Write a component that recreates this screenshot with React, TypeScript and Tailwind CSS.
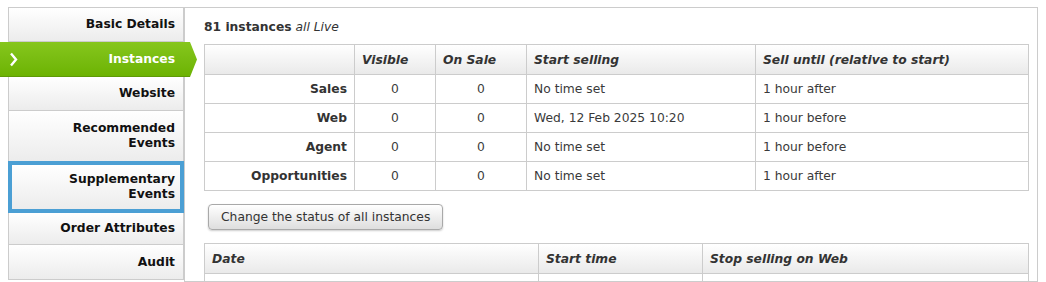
import React from "react";

const rows = [
  { label: "Sales", visible: 0, onSale: 0, start: "No time set", until: "1 hour after" },
  { label: "Web", visible: 0, onSale: 0, start: "Wed, 12 Feb 2025 10:20", until: "1 hour before" },
  { label: "Agent", visible: 0, onSale: 0, start: "No time set", until: "1 hour before" },
  { label: "Opportunities", visible: 0, onSale: 0, start: "No time set", until: "1 hour after" },
];

function NavItem({ children, h }: { children: React.ReactNode; h: string }) {
  return (
    <div
      className={`${h} flex items-center justify-end border-x border-b border-[#cccccc] bg-gradient-to-b from-white to-[#ececec] pr-[8px] text-right font-bold leading-[15px] text-[#111]`}
    >
      <span>{children}</span>
    </div>
  );
}

export default function App() {
  return (
    <div className="flex w-[1046px] h-[282px] overflow-hidden bg-white pt-[7px] font-['DejaVu_Sans',sans-serif] text-[12.3px] text-[#3a3a3a]">
      {/* sidebar */}
      <div className="ml-[8px] flex w-[176px] shrink-0 flex-col border-t border-[#cccccc]">
        <NavItem h="h-[34px]">Basic Details</NavItem>
        <div
          className="relative z-10 -ml-[8px] -mr-[13px] flex h-[35px] items-center justify-end border-b border-[#5e9a06] bg-gradient-to-b from-[#86c61c] to-[#6cb302] pr-[22px] font-bold text-white"
          style={{ clipPath: "polygon(0 0, 190px 0, 197px 50%, 190px 100%, 0 100%)" }}
        >
          <svg className="absolute left-[9px] top-[10px]" width="9" height="15" viewBox="0 0 9 15">
            <polyline points="2,1.5 7,7.5 2,13.5" fill="none" stroke="white" strokeWidth="2.4" />
          </svg>
          Instances
        </div>
        <NavItem h="h-[34px]">Website</NavItem>
        <NavItem h="h-[51px]">
          Recommended
          <br />
          Events
        </NavItem>
        <div className="flex h-[52px] -mt-px items-center justify-end border-4 border-[#4b9fd4] bg-gradient-to-b from-white to-[#ececec] pr-[5px] text-right font-bold leading-[15px] text-[#111]">
          <span>
            Supplementary
            <br />
            Events
          </span>
        </div>
        <NavItem h="h-[32px]">Order Attributes</NavItem>
        <NavItem h="h-[35px]">Audit</NavItem>
      </div>

      {/* main panel */}
      <div className="ml-0 mr-[8px] flex-1 border border-[#cccccc] pl-[19px] pr-[8px]">
        <div className="mt-[11px] h-[17px] leading-[17px] text-[#333]">
          <span className="font-bold">81 instances</span> <span className="italic">all Live</span>
        </div>

        <table className="mt-[8px] w-full table-fixed border-collapse">
          <colgroup>
            <col className="w-[150px]" />
            <col className="w-[81px]" />
            <col className="w-[91px]" />
            <col className="w-[229px]" />
            <col />
          </colgroup>
          <thead>
            <tr className="h-[30px] bg-gradient-to-b from-white to-[#e9e9e9]">
              <th className="border border-[#cccccc]"></th>
              {["Visible", "On Sale", "Start selling", "Sell until (relative to start)"].map((t) => (
                <th key={t} className="border border-[#cccccc] pl-[7px] pt-px text-left font-bold italic text-[#333]">
                  {t}
                </th>
              ))}
            </tr>
          </thead>
          <tbody>
            {rows.map((r) => (
              <tr key={r.label} className="h-[29px]">
                <td className="border border-[#cccccc] pr-[7px] pt-px text-right font-bold text-[#333]">{r.label}</td>
                <td className="border border-[#cccccc] pt-px text-center">{r.visible}</td>
                <td className="border border-[#cccccc] pt-px text-center">{r.onSale}</td>
                <td className="border border-[#cccccc] pl-[7px] pt-px">{r.start}</td>
                <td className="border border-[#cccccc] pl-[7px] pt-px">{r.until}</td>
              </tr>
            ))}
          </tbody>
        </table>

        <button className="ml-[4px] mt-[13px] h-[26px] rounded-[4px] border border-[#a9a9a9] bg-gradient-to-b from-white to-[#dedede] px-[12px] text-[12.3px] text-[#333] shadow-[0_1px_2px_rgba(0,0,0,0.2)]">
          Change the status of all instances
        </button>

        <table className="mt-[13px] w-full table-fixed border-collapse">
          <colgroup>
            <col className="w-[334px]" />
            <col className="w-[164px]" />
            <col />
          </colgroup>
          <thead>
            <tr className="h-[30px] bg-gradient-to-b from-white to-[#e9e9e9]">
              {["Date", "Start time", "Stop selling on Web"].map((t) => (
                <th key={t} className="border border-[#cccccc] pl-[7px] pt-px text-left font-bold italic text-[#333]">
                  {t}
                </th>
              ))}
            </tr>
          </thead>
          <tbody>
            <tr className="h-[29px]">
              <td className="border border-[#cccccc]"></td>
              <td className="border border-[#cccccc]"></td>
              <td className="border border-[#cccccc]"></td>
            </tr>
          </tbody>
        </table>
      </div>
    </div>
  );
}
